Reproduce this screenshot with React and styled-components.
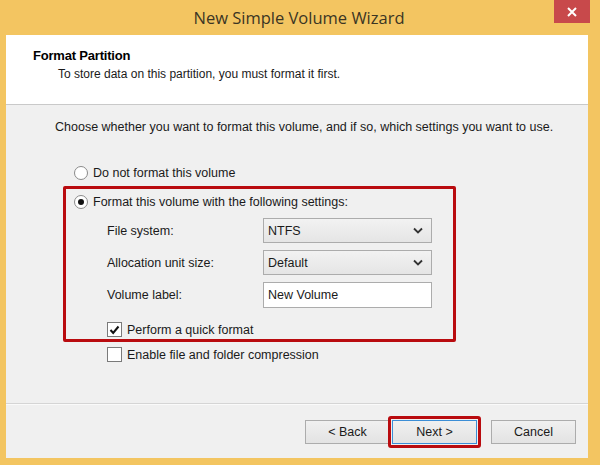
import React from "react";
import styled, { createGlobalStyle } from "styled-components";

const GlobalStyle = createGlobalStyle`
  html, body {
    margin: 0;
    padding: 0;
    background: #f3c561;
  }
  * {
    box-sizing: border-box;
  }
`;

const Window = styled.div`
  width: 600px;
  height: 465px;
  background: #f3c561;
  display: flex;
  flex-direction: column;
  padding: 0 12px 7px 6px;
  font-family: "Liberation Sans", Arial, sans-serif;
  color: #1a1a1a;
`;

const TitleBar = styled.div`
  height: 35px;
  display: grid;
  grid-template-columns: 1fr auto 1fr;
  align-items: start;
`;

const Title = styled.div`
  grid-column: 2;
  margin-top: 6px;
  font-family: "Open Sans", "Noto Sans", sans-serif;
  font-size: 16.5px;
  color: #3b3524;
  margin-left: 4px;
`;

const CloseButton = styled.div`
  grid-column: 3;
  justify-self: end;
  margin-right: -2px;
  width: 36px;
  height: 23px;
  background: #c8494b;
  display: flex;
  align-items: center;
  justify-content: center;
`;

const Header = styled.div`
  height: 70px;
  background: #ffffff;
  border-bottom: 1px solid #c9c9c9;
  padding: 13px 0 0 27px;
`;

const HeaderTitle = styled.div`
  font-weight: bold;
  font-size: 13px;
  letter-spacing: -0.2px;
  color: #000;
`;

const HeaderText = styled.div`
  margin-top: 4px;
  margin-left: 25px;
  font-size: 12px;
`;

const Body = styled.div`
  flex: 1;
  background: #f0f0f0;
  padding: 15px 0 0 49px;
  border-bottom: 1px solid #d5d5d5;
  font-size: 12px;
`;

const Intro = styled.div`
  font-size: 12.5px;
`;

const OptionRow = styled.label`
  display: flex;
  align-items: center;
  gap: 5px;
  height: 15px;
  margin-left: ${(p) => p.$indent || 0}px;
  margin-top: ${(p) => p.$top || 0}px;
  font-size: 12.5px;
`;

const Radio = styled.span`
  width: 14px;
  height: 14px;
  border-radius: 50%;
  border: 1px solid #8a8a8a;
  background: #fff;
  display: flex;
  align-items: center;
  justify-content: center;
  &::after {
    content: "";
    width: 6px;
    height: 6px;
    border-radius: 50%;
    background: ${(p) => (p.$checked ? "#111" : "transparent")};
  }
`;

const Check = styled.span`
  width: 15px;
  height: 15px;
  border: 1px solid #7a7a7a;
  background: #fff;
  display: flex;
  align-items: center;
  justify-content: center;
`;

const Highlight = styled.div`
  width: 393px;
  margin-left: 8px;
  margin-top: 6px;
  border: 3px solid #b90b0f;
  border-radius: 2px;
  padding: 5px 0 2px 8px;
`;

const FieldGrid = styled.div`
  display: grid;
  grid-template-columns: 156px 169px;
  row-gap: 7px;
  margin: 9px 0 0 33px;
  align-items: center;
`;

const FieldLabel = styled.div`
  font-size: 12.5px;
`;

const Select = styled.div`
  height: 25px;
  border: 1px solid #acacac;
  background: linear-gradient(#f2f2f2, #e5e5e5);
  display: flex;
  align-items: center;
  justify-content: space-between;
  padding: 0 8px 0 4px;
  font-size: 12.5px;
`;

const TextInput = styled.div`
  height: 26px;
  border: 1px solid #acacac;
  background: #fff;
  display: flex;
  align-items: center;
  padding: 0 4px;
  font-size: 12.5px;
`;

const Footer = styled.div`
  height: 54px;
  background: #f0f0f0;
  border-top: 1px solid #fafafa;
  display: flex;
  align-items: center;
  justify-content: flex-end;
  padding: 0 12px 0 0;
`;

const Button = styled.div`
  width: 85px;
  height: 24px;
  border: 1px solid ${(p) => (p.$primary ? "#3c8ed6" : "#acacac")};
  background: linear-gradient(#f0f0f0, #e3e3e3);
  display: flex;
  align-items: center;
  justify-content: center;
  font-size: 12.5px;
  margin-left: ${(p) => p.$gap || 0}px;
`;

const ButtonFrame = styled.div`
  margin-left: -2px;
  border: 3px solid #b90b0f;
  border-radius: 3px;
  padding: 1px;
  display: flex;
`;

const Chevron = () => (
  <svg width="10" height="7" viewBox="0 0 10 7">
    <path d="M1 1.5 L5 5.5 L9 1.5" stroke="#333" strokeWidth="1.8" fill="none" />
  </svg>
);

const App = () => {
  return (
    <>
      <GlobalStyle />
      <Window>
        <TitleBar>
          <Title>New Simple Volume Wizard</Title>
          <CloseButton>
            <svg width="10" height="10" viewBox="0 0 10 10">
              <path d="M1 1 L9 9 M9 1 L1 9" stroke="#fff" strokeWidth="2" />
            </svg>
          </CloseButton>
        </TitleBar>
        <Header>
          <HeaderTitle>Format Partition</HeaderTitle>
          <HeaderText>To store data on this partition, you must format it first.</HeaderText>
        </Header>
        <Body>
          <Intro>
            Choose whether you want to format this volume, and if so, which settings you want to use.
          </Intro>
          <OptionRow $indent={19} $top={31}>
            <Radio />
            Do not format this volume
          </OptionRow>
          <Highlight>
            <OptionRow>
              <Radio $checked />
              Format this volume with the following settings:
            </OptionRow>
            <FieldGrid>
              <FieldLabel>File system:</FieldLabel>
              <Select>
                NTFS
                <Chevron />
              </Select>
              <FieldLabel>Allocation unit size:</FieldLabel>
              <Select>
                Default
                <Chevron />
              </Select>
              <FieldLabel>Volume label:</FieldLabel>
              <TextInput>New Volume</TextInput>
            </FieldGrid>
            <OptionRow $indent={33} $top={14}>
              <Check>
                <svg width="11" height="10" viewBox="0 0 11 10">
                  <path d="M1.5 5 L4.2 8 L9.5 1.5" stroke="#111" strokeWidth="2" fill="none" />
                </svg>
              </Check>
              Perform a quick format
            </OptionRow>
          </Highlight>
          <OptionRow $indent={52} $top={5}>
            <Check />
            Enable file and folder compression
          </OptionRow>
        </Body>
        <Footer>
          <Button>&lt; Back</Button>
          <ButtonFrame>
            <Button $primary>Next &gt;</Button>
          </ButtonFrame>
          <Button $gap={10}>Cancel</Button>
        </Footer>
      </Window>
    </>
  );
};

export default App;
